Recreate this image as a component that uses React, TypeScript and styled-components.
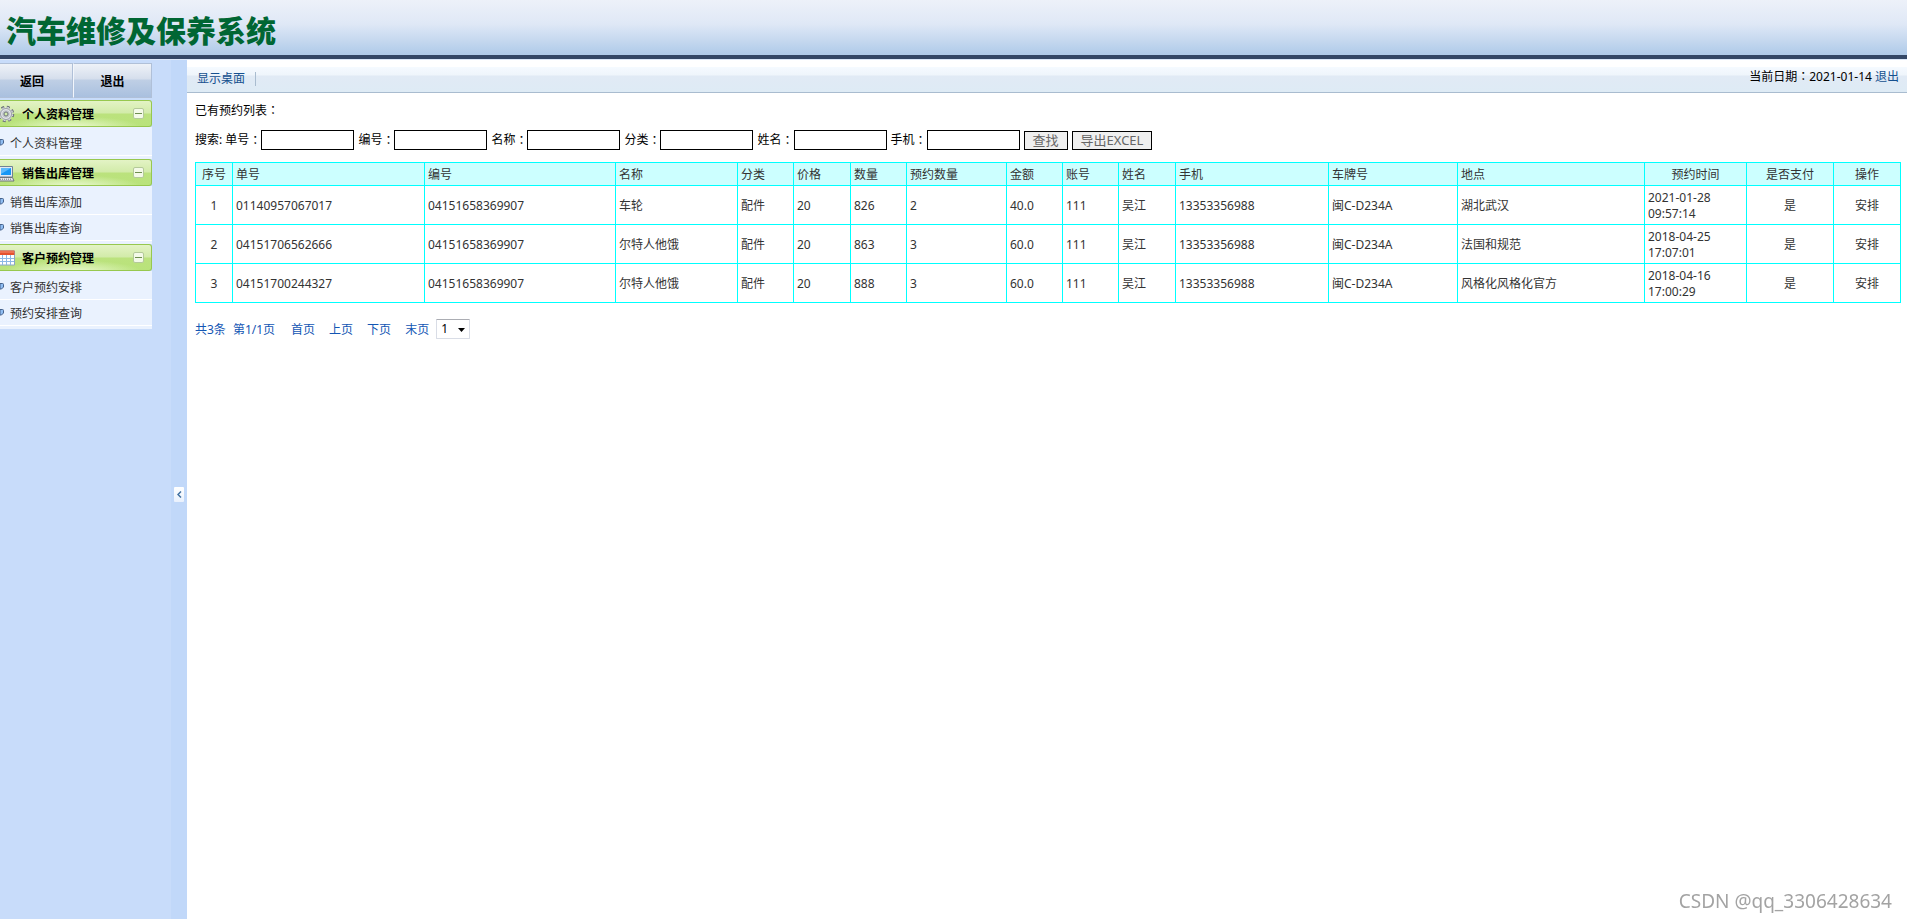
import React from "react";
import styled, { createGlobalStyle } from "styled-components";

const GlobalStyle = createGlobalStyle`
  *, *::before, *::after { box-sizing: border-box; }
  body {
    margin: 0;
    background: #fff;
    color: #000;
    font: 12px/16px "Noto Sans", "Noto Sans CJK SC", sans-serif;
  }
  a { color: inherit; text-decoration: none; }
  h1, h2, ul, p { margin: 0; padding: 0; }
  ul { list-style: none; }
`;

const Page = styled.div`
  display: flex;
  flex-direction: column;
  min-height: 100vh;
`;

const Banner = styled.header`
  display: flex;
  align-items: center;
  height: 60px;
  padding: 0 6px;
  background: linear-gradient(#edf1f9 0, #dfe8f6 24px, #b0cbe9 54px);
  background-color: #304765;
  background-size: 100% 55px;
  background-repeat: no-repeat;
  border-bottom: 1px solid #dce9fa;
  box-shadow: inset 0 -4px 0 #334766;
`;

const Title = styled.h1`
  padding-top: 2px;
  color: #006633;
  font-size: 30px;
  line-height: 40px;
  font-weight: 900;
`;

const Body = styled.div`
  display: flex;
  flex: 1;
`;

const Sidebar = styled.nav`
  flex: none;
  width: 171px;
  padding: 3px 19px 0 0;
  background: #c8dcfa;
`;

const TopButtons = styled.div`
  display: flex;
  height: 35px;
  margin-bottom: 2px;
`;

const TopButton = styled.button<{ $grow?: boolean }>`
  flex: ${(p) => (p.$grow ? "1" : "none")};
  width: 73px;
  padding: 2px 0 0;
  border: 1px solid #b0c0d8;
  border-left: ${(p) => (p.$grow ? "1px solid #f2f6fc" : "0")};
  background: linear-gradient(#eef2f8 0, #d5deec 15px, #bfcfe5 16px, #a9c0df 100%);
  color: #000;
  font: bold 12px/16px "Noto Sans", "Noto Sans CJK SC", sans-serif;
  text-indent: ${(p) => (p.$grow ? "0" : "-8px")};
`;

const GroupHeader = styled.h2`
  display: flex;
  align-items: center;
  height: 27px;
  padding-right: 7px;
  overflow: hidden;
  border: 1px solid #97c84e;
  border-left: 0;
  border-radius: 0 3px 3px 0;
  background:
    radial-gradient(ellipse 70px 12px at 72px 27px, #eefad6, rgba(238, 250, 214, 0)),
    linear-gradient(#e3f3c5 0, #d2eba9 12px, #bbe27d 13px, #b9e37b 100%);
  font-size: 12px;
  line-height: 16px;
`;

const GroupIcon = styled.svg`
  flex: none;
  width: 16px;
  height: 18px;
  margin-right: 6px;
`;

const GroupTitle = styled.span`
  flex: 1;
  padding-top: 2px;
`;

const Toggle = styled.button`
  display: grid;
  place-items: center;
  width: 11px;
  height: 11px;
  padding: 0;
  border: 1px solid #b4c99a;
  border-radius: 2px;
  background: #f4fae8;

  &::before {
    content: "";
    width: 7px;
    height: 1px;
    background: #6f8f50;
  }
`;

const GroupList = styled.ul`
  padding: 3px 0;
  background: #eaf2fe;
`;

const GroupItem = styled.li`
  display: flex;
  align-items: center;
  height: 26px;
  border-bottom: 1px solid #fff;
  color: #333;

  a { padding-top: 2px; }
`;

const Bullet = styled.svg`
  flex: none;
  width: 4px;
  height: 7px;
  margin-right: 6px;
`;

const Splitter = styled.div`
  display: flex;
  flex: none;
  align-items: center;
  justify-content: center;
  width: 16px;
  padding-top: 10px;
  background: #c1d8f9;
`;

const Collapse = styled.button`
  display: grid;
  place-items: center;
  width: 10px;
  height: 15px;
  padding: 0;
  border: 0;
  border-radius: 1px;
  background: linear-gradient(#fff, #e9f1fd);
`;

const Main = styled.main`
  flex: 1;
  min-width: 0;
  padding-top: 7px;
`;

const Toolbar = styled.div`
  display: flex;
  align-items: center;
  justify-content: space-between;
  height: 26px;
  padding: 0 8px 0 10px;
  border-bottom: 1px solid #a9bccf;
  background: linear-gradient(#f5faff 0, #eff5fb 8px, #e1eaf5 9px, #deebf5 100%);
`;

const DesktopLink = styled.a`
  margin-bottom: 2px;
  padding-right: 10px;
  border-right: 1px solid #a9bccf;
  color: #15508f;
  line-height: 14px;
`;

const Today = styled.div`
  padding-bottom: 6px;

  a { color: #15508f; }
`;

const Content = styled.div`
  padding: 10px 6px 0 8px;
`;

/* Full-width colon set in the middle of its cell */
const ColonMark = styled.span`
  font-family: "Noto Sans CJK TC", sans-serif;
  line-height: 1;
`;
const Colon = () => <ColonMark>：</ColonMark>;

const SearchForm = styled.form`
  display: flex;
  flex-wrap: wrap;
  align-items: center;
  column-gap: 4px;
  margin: 11px 0 12px;
`;

const Field = styled.label`
  display: flex;
  align-items: center;
  height: 20px;
  white-space: pre;
`;

const TextBox = styled.input`
  width: 93px;
  height: 20px;
  padding: 0 2px;
  border: 1px solid #000;
  background: #fff;
  font: inherit;
`;

const FormButton = styled.button`
  height: 19px;
  padding: 0 8px;
  border: 1px solid #000;
  background: #efefef;
  color: #666;
  font: 13px/16px "Noto Sans", "Noto Sans CJK SC", sans-serif;
`;

const Table = styled.table`
  width: 100%;
  table-layout: fixed;
  border-collapse: collapse;
  color: #333;
`;

const Col = styled.col<{ $width: number }>`
  width: ${(p) => p.$width}px;
`;

const HeadCell = styled.th<{ $center?: boolean }>`
  height: 23px;
  padding: 2px 3px 0;
  border: 1px solid #00ffff;
  background: #ccffff;
  font-weight: 400;
  text-align: ${(p) => (p.$center ? "center" : "left")};
`;

const Cell = styled.td<{ $center?: boolean }>`
  height: 39px;
  padding: 4px 3px 2px;
  border: 1px solid #00ffff;
  text-align: ${(p) => (p.$center ? "center" : "left")};
`;

const Pager = styled.div`
  display: flex;
  align-items: center;
  margin-top: 16px;
  color: #1356b4;

  > :not(label) { padding-top: 2px; }
`;

const PagerLinks = styled.div`
  display: flex;
  gap: 14px;
  margin: 0 7px 0 16px;
`;

const PagerCount = styled.span`
  margin-right: 7px;
`;

const PageSelect = styled.label`
  position: relative;
  display: block;

  select {
    display: block;
    width: 34px;
    height: 20px;
    padding: 0 4px;
    appearance: none;
    border: 1px solid #d9dde6;
    border-top-color: #abadb3;
    border-radius: 1px;
    background: #fff;
    color: #000;
    font: inherit;
  }

  svg {
    position: absolute;
    top: 9px;
    right: 5px;
    pointer-events: none;
  }
`;

const Watermark = styled.div`
  position: fixed;
  right: 15px;
  bottom: 7px;
  color: #a3a3a3;
  font: 19px/22px "Noto Sans", sans-serif;
  text-shadow: -1px -1px 0 #fff;
`;

const GearIcon = () => (
  <GroupIcon viewBox="0 0 16 18" aria-hidden="true">
    <circle cx="6" cy="9" r="6.500" fill="none" stroke="#6b7078" strokeWidth="3.500" strokeDasharray="2.700 2.400" />
    <circle cx="6" cy="9" r="6.500" fill="#dfe1e5" stroke="#d3d6db" strokeWidth="1.500" strokeDasharray="1.700 3.400" strokeDashoffset="-.5" />
    <circle cx="6" cy="9" r="5.500" fill="#e4e6e9" stroke="#858a93" strokeWidth=".8" />
    <circle cx="6" cy="9" r="3.800" fill="#bfc4cb" />
    <circle cx="6" cy="9" r="2" fill="#d2eda9" stroke="#70757e" strokeWidth="1" />
  </GroupIcon>
);

const MonitorIcon = () => (
  <GroupIcon viewBox="0 0 16 18" aria-hidden="true">
    <path d="M-2 2.500h14.500v10.500H-2z" fill="#e3eaf1" stroke="#718294" />
    <path d="M1 4h10v7H1z" fill="#1697f5" />
    <path d="M1 4h10L1 10z" fill="#5cb9fb" />
    <path d="M-1 13.500h13.500l1.500 3.500H-1z" fill="#e6e8eb" stroke="#6e747c" />
    <path d="M0 15.200h12" stroke="#6e747c" strokeDasharray="1 1" />
  </GroupIcon>
);

const CalendarIcon = () => (
  <GroupIcon viewBox="0 0 16 18" aria-hidden="true">
    <path d="M-2 2h16.500v14H-2z" fill="#fff" stroke="#8aa5c7" />
    <path d="M-2 1.500h16.500v4.500H-2z" fill="#e5522e" />
    <path d="M-2 3h16" stroke="#f39077" />
    <path d="M-2 9.500h16M-2 12.500h16M2.500 6v10M6.500 6v10M10.500 6v10" stroke="#8db8e5" />
  </GroupIcon>
);

const menu = [
  { title: "个人资料管理", icon: <GearIcon />, items: ["个人资料管理"] },
  { title: "销售出库管理", icon: <MonitorIcon />, items: ["销售出库添加", "销售出库查询"] },
  { title: "客户预约管理", icon: <CalendarIcon />, items: ["客户预约安排", "预约安排查询"] },
];

const fields = ["单号", "编号", "名称", "分类", "姓名", "手机"];

const columns: { name: string; width: number; center?: boolean; centerHead?: boolean }[] = [
  { name: "序号", width: 37, center: true },
  { name: "单号", width: 192 },
  { name: "编号", width: 191 },
  { name: "名称", width: 122 },
  { name: "分类", width: 56 },
  { name: "价格", width: 57 },
  { name: "数量", width: 56 },
  { name: "预约数量", width: 100 },
  { name: "金额", width: 56 },
  { name: "账号", width: 56 },
  { name: "姓名", width: 57 },
  { name: "手机", width: 153 },
  { name: "车牌号", width: 129 },
  { name: "地点", width: 187 },
  { name: "预约时间", width: 102, centerHead: true },
  { name: "是否支付", width: 87, center: true },
  { name: "操作", width: 67, center: true },
];

const rows = [
  ["1", "01140957067017", "04151658369907", "车轮", "配件", "20", "826", "2", "40.0", "111", "吴江", "13353356988", "闽C-D234A", "湖北武汉", "2021-01-28 09:57:14", "是"],
  ["2", "04151706562666", "04151658369907", "尔特人他饿", "配件", "20", "863", "3", "60.0", "111", "吴江", "13353356988", "闽C-D234A", "法国和规范", "2018-04-25 17:07:01", "是"],
  ["3", "04151700244327", "04151658369907", "尔特人他饿", "配件", "20", "888", "3", "60.0", "111", "吴江", "13353356988", "闽C-D234A", "风格化风格化官方", "2018-04-16 17:00:29", "是"],
];

export default function App() {
  return (
    <Page>
      <GlobalStyle />
      <Banner>
        <Title>汽车维修及保养系统</Title>
      </Banner>
      <Body>
        <Sidebar>
          <TopButtons>
            <TopButton type="button">返回</TopButton>
            <TopButton type="button" $grow>退出</TopButton>
          </TopButtons>
          {menu.map((group) => (
            <section key={group.title}>
              <GroupHeader>
                {group.icon}
                <GroupTitle>{group.title}</GroupTitle>
                <Toggle type="button" aria-label={group.title} />
              </GroupHeader>
              <GroupList>
                {group.items.map((item) => (
                  <GroupItem key={item}>
                    <Bullet viewBox="0 0 4 7" aria-hidden="true">
                      <path d="M0 .5h2.500a1 1 0 0 1 1 1v2.500l-2 2H0z" fill="#8fbdf2" stroke="#46638c" />
                    </Bullet>
                    <a href="#">{item}</a>
                  </GroupItem>
                ))}
              </GroupList>
            </section>
          ))}
        </Sidebar>
        <Splitter>
          <Collapse type="button" aria-label="显示桌面">
            <svg width="5" height="7" viewBox="0 0 5 7" aria-hidden="true">
              <path d="M4 .5 1 3.500l3 3" fill="none" stroke="#3f6f9f" strokeWidth="1.500" />
            </svg>
          </Collapse>
        </Splitter>
        <Main>
          <Toolbar>
            <DesktopLink href="#">显示桌面</DesktopLink>
            <Today>
              当前日期<Colon />2021-01-14 <a href="#">退出</a>
            </Today>
          </Toolbar>
          <Content>
            <p>已有预约列表<Colon /></p>
            <SearchForm onSubmit={(e) => e.preventDefault()}>
              {fields.map((field, i) => (
                <Field key={field}>
                  {i === 0 ? "搜索: " : ""}{field}<Colon />
                  <TextBox type="text" />
                </Field>
              ))}
              <FormButton type="submit">查找</FormButton>
              <FormButton type="button">导出EXCEL</FormButton>
            </SearchForm>
            <Table>
              <colgroup>
                {columns.map((c) => <Col key={c.name} $width={c.width} />)}
              </colgroup>
              <thead>
                <tr>
                  {columns.map((c) => (
                    <HeadCell key={c.name} $center={c.center || c.centerHead}>{c.name}</HeadCell>
                  ))}
                </tr>
              </thead>
              <tbody>
                {rows.map((row) => (
                  <tr key={row[0]}>
                    {row.map((value, i) => (
                      <Cell key={columns[i].name} $center={columns[i].center}>{value}</Cell>
                    ))}
                    <Cell $center><a href="#">安排</a></Cell>
                  </tr>
                ))}
              </tbody>
            </Table>
            <Pager>
              <PagerCount>共3条</PagerCount>
              <span>第1/1页</span>
              <PagerLinks>
                <a href="#">首页</a>
                <a href="#">上页</a>
                <a href="#">下页</a>
                <a href="#">末页</a>
              </PagerLinks>
              <PageSelect>
                <select defaultValue="1" aria-label="第1/1页">
                  <option>1</option>
                </select>
                <svg width="7" height="4" viewBox="0 0 7 4" aria-hidden="true">
                  <path d="M0 0h7L3.500 4z" fill="#000" />
                </svg>
              </PageSelect>
            </Pager>
          </Content>
        </Main>
      </Body>
      <Watermark>CSDN @qq_3306428634</Watermark>
    </Page>
  );
}
